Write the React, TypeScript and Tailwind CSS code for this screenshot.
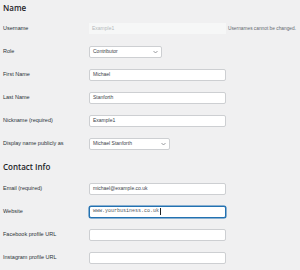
import React from "react";

const Chevron = () => (
  <svg width="5" height="4" viewBox="0 0 10 8" className="shrink-0">
    <path d="M1 2l4 4 4-4" fill="none" stroke="#787c82" strokeWidth="1.5" />
  </svg>
);

const Row = ({ label, children }: { label: string; children: React.ReactNode }) => (
  <div className="flex h-[23px] items-center">
    <div className="w-[89px] shrink-0 pl-[3px] text-[5.5px] text-[#2c3338]">{label}</div>
    {children}
  </div>
);

const TextInput = ({ value, mono, focus }: { value?: string; mono?: boolean; focus?: boolean }) => (
  <div
    className={`flex h-[12px] w-[137px] items-center rounded-[2px] border bg-white px-[3px] text-[5px] text-[#3c434a] ${
      focus ? "border-[#2271b1] shadow-[0_0_0_0.5px_#2271b1]" : "border-[#cdcfd2]"
    } ${mono ? "font-['Liberation_Mono',monospace] text-[#50575e]" : ""}`}
  >
    <span>{value}</span>
    {focus && <span className="ml-[0.5px] h-[7px] w-[0.5px] bg-[#1d2327]" />}
  </div>
);

const Select = ({ value, width }: { value: string; width: string }) => (
  <div
    className={`flex h-[12px] ${width} items-center justify-between rounded-[2px] border border-[#cdcfd2] bg-white pl-[3px] pr-[3px] text-[5px] text-[#3c434a]`}
  >
    <span>{value}</span>
    <Chevron />
  </div>
);

export default function App() {
  return (
    <div className="h-[270px] w-[300px] overflow-hidden bg-[#f0f0f1] font-['Liberation_Sans',Arial,sans-serif]">
      {/* Name */}
      <div className="flex h-[17px] items-start pl-[3px] pt-[2px] font-['Open_Sans',sans-serif] text-[8px] font-semibold text-[#1d2327]">
        Name
      </div>

      <Row label="Username">
        <div className="flex h-[11px] w-[137px] items-center bg-[#f6f7f7] px-[3px] text-[5px] text-[#b4b7bb]">
          Example1
        </div>
        <div className="ml-[2px] whitespace-nowrap text-[4.8px] text-[#646970]">Usernames cannot be changed.</div>
      </Row>
      <Row label="Role">
        <Select value="Contributor" width="w-[73px]" />
      </Row>
      <Row label="First Name">
        <TextInput value="Michael" />
      </Row>
      <Row label="Last Name">
        <TextInput value="Stanforth" />
      </Row>
      <Row label="Nickname (required)">
        <TextInput value="Example1" />
      </Row>
      <Row label="Display name publicly as">
        <Select value="Michael Stanforth" width="w-[81px]" />
      </Row>

      {/* Contact Info */}
      <div className="flex h-[22px] items-center pl-[3px] pt-[1px] font-['Open_Sans',sans-serif] text-[8px] font-semibold text-[#1d2327]">
        Contact Info
      </div>

      <Row label="Email (required)">
        <TextInput value="michael@example.co.uk" />
      </Row>
      <Row label="Website">
        <TextInput value="www.yourbusiness.co.uk" mono focus />
      </Row>
      <Row label="Facebook profile URL">
        <TextInput />
      </Row>
      <Row label="Instagram profile URL">
        <TextInput />
      </Row>
    </div>
  );
}
